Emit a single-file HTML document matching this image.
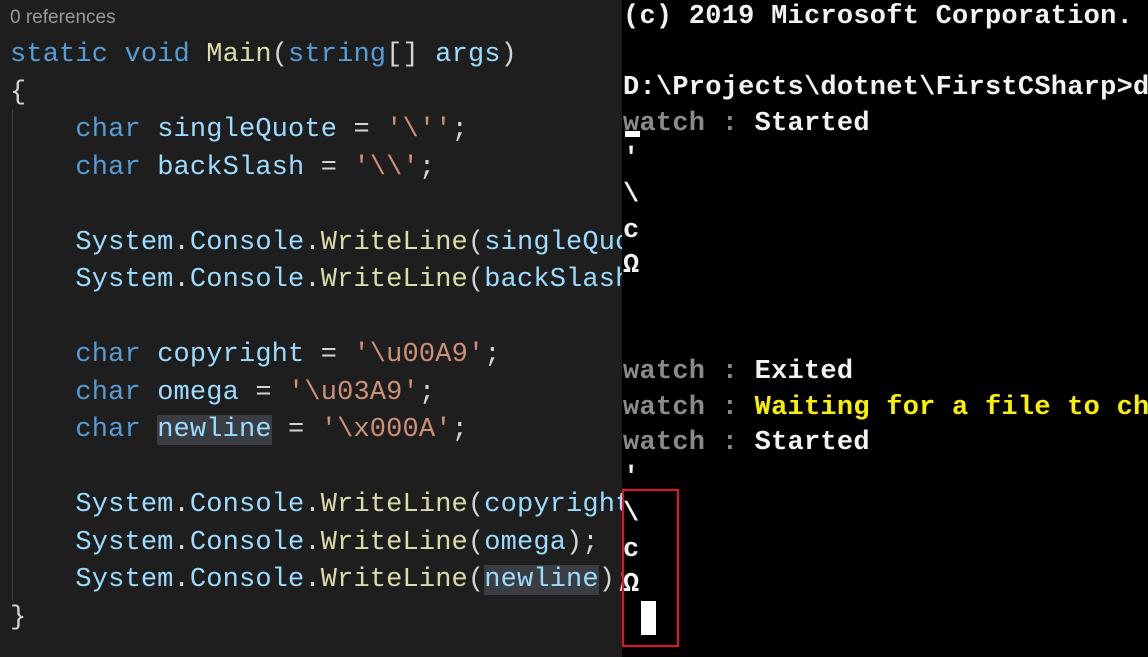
<!DOCTYPE html>
<html><head><meta charset="utf-8"><style>
html,body{margin:0;padding:0;width:1148px;height:657px;overflow:hidden;background:#1e1e1e}
#code{position:absolute;left:0;top:0;width:622px;height:657px;background:#1e1e1e;overflow:hidden}
.l{position:absolute;left:10px;white-space:pre;font-family:"Liberation Mono","DejaVu Sans Mono",monospace;font-size:27px;line-height:37px;color:#d4d4d4;letter-spacing:0.15px}
.k{color:#569cd6}.v{color:#9cdcfe}.f{color:#dcdcaa}.s{color:#ce9178}.hl{background:#3a3d41}
#ref{position:absolute;left:10px;top:7px;font-family:"Liberation Sans",sans-serif;font-size:19px;color:#999}
#guide{position:absolute;left:12px;top:110px;width:1px;height:490px;background:#404040}
#term{position:absolute;left:622px;top:0;width:526px;height:657px;background:#000;overflow:hidden}
.t{position:absolute;left:1px;white-space:pre;font-family:"Liberation Mono","DejaVu Sans Mono",monospace;font-weight:bold;font-size:27px;line-height:35px;color:#f2f2f2;letter-spacing:0.25px}
.g{color:#8a8a8a}.y{color:#f9f100}
#box{position:absolute;left:0;top:489px;width:53px;height:154px;border:2px solid #e81123}
#cur{position:absolute;left:19px;top:601px;width:15px;height:34px;background:#fff}
</style></head><body>
<div id="code">
<div id="ref">0 references</div>
<div id="guide"></div>
<div class="l" style="top:37px"><span class="k">static</span> <span class="k">void</span> <span class="f">Main</span>(<span class="k">string</span>[] <span class="v">args</span>)</div>
<div class="l" style="top:75px">{</div>
<div class="l" style="top:112px">    <span class="k">char</span> <span class="v">singleQuote</span> = <span class="s">'\''</span>;</div>
<div class="l" style="top:150px">    <span class="k">char</span> <span class="v">backSlash</span> = <span class="s">'\\'</span>;</div>
<div class="l" style="top:225px">    <span class="v">System</span>.<span class="v">Console</span>.<span class="f">WriteLine</span>(<span class="v">singleQuote</span>);</div>
<div class="l" style="top:262px">    <span class="v">System</span>.<span class="v">Console</span>.<span class="f">WriteLine</span>(<span class="v">backSlash</span>);</div>
<div class="l" style="top:337px">    <span class="k">char</span> <span class="v">copyright</span> = <span class="s">'\u00A9'</span>;</div>
<div class="l" style="top:375px">    <span class="k">char</span> <span class="v">omega</span> = <span class="s">'\u03A9'</span>;</div>
<div class="l" style="top:412px">    <span class="k">char</span> <span class="v hl">newline</span> = <span class="s">'\x000A'</span>;</div>
<div class="l" style="top:487px">    <span class="v">System</span>.<span class="v">Console</span>.<span class="f">WriteLine</span>(<span class="v">copyright</span>);</div>
<div class="l" style="top:525px">    <span class="v">System</span>.<span class="v">Console</span>.<span class="f">WriteLine</span>(<span class="v">omega</span>);</div>
<div class="l" style="top:562px">    <span class="v">System</span>.<span class="v">Console</span>.<span class="f">WriteLine</span>(<span class="v hl">newline</span>);</div>
<div class="l" style="top:600px">}</div>
</div>
<div id="term">
<div class="t" style="top:0px">(c) 2019 Microsoft Corporation. All rights reserved.</div>
<div class="t" style="top:71px">D:\Projects\dotnet\FirstCSharp&gt;dotnet watch run</div>
<div class="t" style="top:107px"><span class="g">watch :</span> Started</div>
<div class="t" style="top:142px">'</div>
<div class="t" style="top:178px">\</div>
<div class="t" style="top:214px">c</div>
<div class="t" style="top:249px">Ω</div>
<div class="t" style="top:355px"><span class="g">watch :</span> Exited</div>
<div class="t" style="top:391px"><span class="g">watch :</span> <span class="y">Waiting for a file to change before restarting dotnet...</span></div>
<div class="t" style="top:426px"><span class="g">watch :</span> Started</div>
<div class="t" style="top:461px">'</div>
<div class="t" style="top:497px">\</div>
<div class="t" style="top:533px">c</div>
<div class="t" style="top:568px">Ω</div>
<div style="position:absolute;left:3px;top:131px;width:15px;height:6px;background:#fff"></div>
<div id="cur"></div>
<div id="box"></div>
</div>
</body></html>
